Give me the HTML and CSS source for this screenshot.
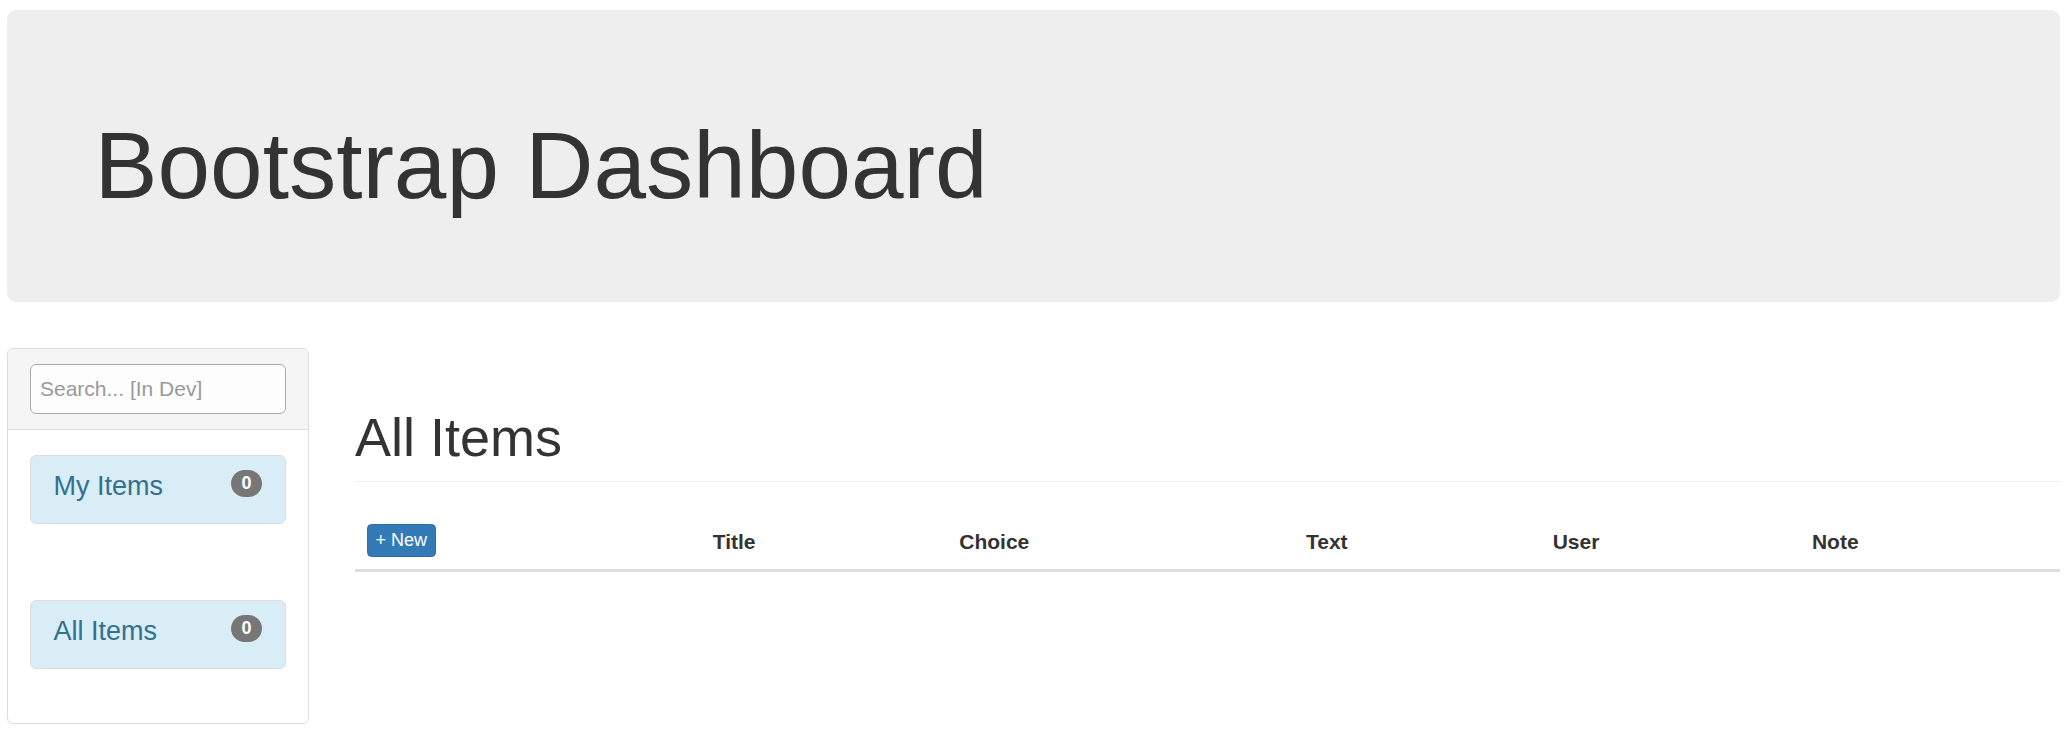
FILE: index.html
```html
<!DOCTYPE html>
<html lang="en">
<head>
<meta charset="utf-8">
<title>Bootstrap Dashboard</title>
<link rel="stylesheet" href="styles.css">
</head>
<body>
<div class="page">
  <header class="jumbotron">
    <h1 class="jumbo-title">Bootstrap Dashboard</h1>
  </header>
  <div class="row">
    <aside class="panel">
      <div class="panel-heading">
        <input class="search" type="text" placeholder="Search... [In Dev]">
      </div>
      <div class="panel-body">
        <a class="list-item first" href="#"><span class="item-label">My Items</span><span class="badge">0</span></a>
        <a class="list-item" href="#"><span class="item-label">All Items</span><span class="badge">0</span></a>
      </div>
    </aside>
    <main class="main">
      <div class="page-header">
        <h1 class="page-title">All Items</h1>
      </div>
      <table class="items-table">
        <colgroup>
          <col class="c-new">
          <col class="c-title">
          <col class="c-choice">
          <col class="c-text">
          <col class="c-user">
          <col class="c-note">
        </colgroup>
        <thead>
          <tr>
            <th><button class="btn-new" type="button">+ New</button></th>
            <th>Title</th>
            <th>Choice</th>
            <th>Text</th>
            <th>User</th>
            <th>Note</th>
          </tr>
        </thead>
        <tbody></tbody>
      </table>
    </main>
  </div>
</div>
</body>
</html>
```

FILE: styles.css
```css
* {
  box-sizing: border-box;
}

html, body {
  margin: 0;
  padding: 0;
  background: #fff;
}

body {
  font-family: "Liberation Sans", Arial, Helvetica, sans-serif;
  font-size: 21px;
  line-height: 30px;
  color: #333;
}

.page {
  padding: 10px 11px 0 6.5px;
}

.jumbotron {
  background: #eee;
  border-radius: 9px;
  padding: 72px 88px;
  margin-bottom: 46.5px;
}

.jumbo-title {
  margin: 31.5px 0 12.5px;
  font-size: 94.5px;
  line-height: 1.1;
  font-weight: 400;
  color: #333;
}

.row {
  display: flex;
  align-items: flex-start;
  gap: 46px;
}

.panel {
  width: 302.5px;
  flex: none;
  border: 1.5px solid #ddd;
  border-radius: 6px;
  background: #fff;
  overflow: hidden;
}

.panel-heading {
  background: #f5f5f5;
  border-bottom: 1.5px solid #ddd;
  padding: 15px 22.5px;
}

.search {
  display: block;
  width: 100%;
  height: 50px;
  margin: 0;
  padding: 0 9px;
  border: 1.5px solid #a9a9a9;
  border-radius: 6px;
  background: #fdfdfd;
  font-family: "Liberation Sans", Arial, sans-serif;
  font-size: 21px;
  color: #555;
  outline: none;
}

.search::placeholder {
  color: #999;
}

.panel-body {
  padding: 25px 22.5px 53.5px;
}

.list-item {
  display: flex;
  justify-content: space-between;
  align-items: flex-start;
  height: 69px;
  padding: 12px 22.5px 18px;
  background: #d9edf7;
  border: 1.5px solid #ddd;
  border-radius: 6px;
  color: #31708f;
  text-decoration: none;
  font-size: 27px;
  line-height: 36px;
}

.list-item.first {
  margin-bottom: 76px;
}

.badge {
  margin-top: 2px;
  min-width: 31px;
  height: 27px;
  padding: 0 10.5px;
  border-radius: 15px;
  background: #777;
  color: #fff;
  font-size: 18px;
  font-weight: 700;
  line-height: 27px;
  text-align: center;
}

.main {
  flex: 1;
  min-width: 0;
}

.page-header {
  margin: 60px 0 30px;
  padding-bottom: 13.5px;
  border-bottom: 1.5px solid #eee;
}

.page-title {
  margin: 0;
  font-size: 54px;
  line-height: 1.1;
  font-weight: 400;
  color: #333;
}

.items-table {
  width: 100%;
  table-layout: fixed;
  border-collapse: collapse;
  border-spacing: 0;
}

.c-new { width: 345.7px; }
.c-title { width: 246.6px; }
.c-choice { width: 346.7px; }
.c-text { width: 246.7px; }
.c-user { width: 259.3px; }
.c-note { width: auto; }

.items-table th {
  padding: 12px;
  text-align: left;
  vertical-align: bottom;
  font-weight: 700;
  font-size: 21px;
  line-height: 30px;
  color: #333;
  border-bottom: 3px solid #ddd;
}

.btn-new {
  display: inline-block;
  height: 33px;
  margin: 0;
  padding: 0 7.5px;
  background: #337ab7;
  border: 1.5px solid #2e6da4;
  border-radius: 4.5px;
  color: #fff;
  font-family: "Liberation Sans", Arial, sans-serif;
  font-size: 18px;
  line-height: 27px;
  font-weight: 400;
  vertical-align: bottom;
  cursor: pointer;
}
```
